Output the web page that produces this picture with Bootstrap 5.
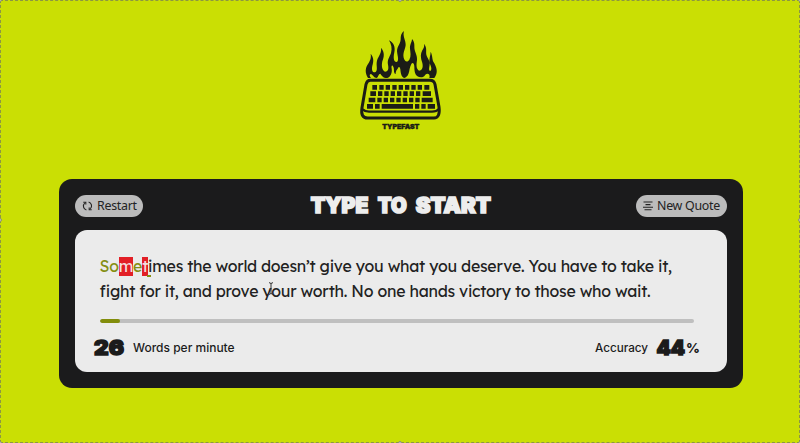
<!DOCTYPE html>
<html lang="en">
<head>
<meta charset="utf-8">
<meta name="viewport" content="width=device-width, initial-scale=1">
<title>Typefast</title>
<link href="https://cdn.jsdelivr.net/npm/bootstrap@5.3.0/dist/css/bootstrap.min.css" rel="stylesheet">
<style>
body{background:#cadf04;color:#1b1b1b;width:800px;height:443px;overflow:hidden;font-family:Inter,sans-serif;position:relative}
.frame-line{position:absolute;inset:0;border:1px dashed #8c9642;pointer-events:none}
.knob{position:absolute;width:4px;height:4px;border-radius:50%;background:#c9cbb5;border:1px solid #8e9470}
.k1{left:-2px;top:-2px}.k2{left:398px;top:-2px}.k3{right:-2px;top:-2px}
.k4{left:-2px;top:218px}.k5{right:-2px;top:218px}
.k6{left:-2px;bottom:-2px}.k7{left:398px;bottom:-2px}.k8{right:-2px;bottom:-2px}
.logo-area{height:179px;padding:20px 0 0 350px}
.logo-area svg{display:block}
.shell{width:684px;height:209px;margin-left:59px;background:#1b1b1c;border-radius:13px;padding:16px 16px 0 16px}
.topbar{height:21px}
.pill{height:22px;border:0;border-radius:11px;background:#bcbcbc;color:#222;font-size:12.4px;letter-spacing:-.27px;line-height:22px;padding:0 7px;white-space:nowrap;font-family:"Noto Sans",sans-serif}
.pill svg{flex:none}
.pill-restart{width:68px}.pill-quote{width:91px}
.title-art{margin-left:169px;margin-right:auto}
.word{font-family:Inter,sans-serif;font-weight:900;font-size:21.5px;fill:#ededed;stroke:#ededed;stroke-width:1.7px;stroke-linejoin:miter;stroke-miterlimit:2}
.paper{height:142px;margin-top:14px;background:#ebebeb;border-radius:12px;padding:24px 24px 0 24.5px}
.quote{font-family:Lexend,"Noto Sans",sans-serif;font-size:15.9px;line-height:24.5px;letter-spacing:-.25px;color:#222;white-space:nowrap;font-feature-settings:"liga" 1}
.ok{color:#858f12}
.bad{background:#e21f26;color:#f4dede;display:inline-block;line-height:19px;height:19px}
.caret{position:relative}
.caret::after{content:"";position:absolute;left:-1px;bottom:-1px;width:4px;height:2px;background:#858f12}
.pointer-i{position:absolute;left:267px;top:282px}
.meter{height:4px;width:594px;margin-top:16px;border-radius:2px;background:#bfbfbf}
.meter .progress-bar{background:#828d0b;border-radius:2px;width:20px}
.stats{margin:16px 3px 0 -7px;height:18px;font-size:12px;font-weight:500;line-height:18px}
.figure-num{font-weight:900;font-size:20px;fill:#1b1b1b;stroke:#1b1b1b;stroke-width:1.4px;stroke-linejoin:miter;stroke-miterlimit:2}
.pct{font-size:13.5px;font-weight:800}
.wpm{margin-left:6.5px}
.acc{margin-right:8px;font-size:11.7px}
</style>
</head>
<body>
<header class="logo-area">
<svg width="100" height="115" viewBox="0 0 300 345" fill="#1b1c16">
<path d="M54 174C44 158 46 144 54 132C60 122 64 115 62 101C72 113 71 124 67 137C64 150 68 158 75 157C84 153 79 139 80 128C81 110 96 103 93 83C105 97 102 111 97 124C94 138 96 151 105 155C116 154 116 145 114 134C111 119 119 111 123 99C127 85 124 73 117 61C132 68 136 82 133 97C129 115 132 126 139 126C147 124 144 112 142 101C138 81 151 75 152 58C152 48 153 40 162 33C157 49 168 61 167 75C166 88 158 97 161 113C164 125 172 128 178 119C184 108 181 97 180 86C179 73 186 66 186 57C196 68 192 77 194 89C196 99 202 106 201 120C199 134 198 146 207 152C217 152 220 141 217 129C211 113 211 101 217 91C221 84 224 79 222 71C233 85 226 95 230 107C234 117 240 122 239 134C238 142 235 151 241 153C247 149 243 139 239 130C236 117 242 106 242 95C248 108 246 116 250 125C261 142 265 157 253 174H238C242 162 232 158 226 164C220 174 210 174 201 168C194 162 193 150 193 140C193 131 188 125 184 132C178 144 179 151 176 160C173 170 166 174 162 174C153 170 152 157 151 148C149 139 146 140 143 146C137 153 137 157 137 162C130 159 133 151 131 143C127 132 123 137 125 146C127 158 122 170 112 174C98 174 95 166 91 161C84 163 86 170 80 174C72 174 69 164 62 162C57 164 59 169 63 174Z"/>
<path d="M61 181H240Q252 181 255 193L267 261Q271 294 252 294H53Q31 294 36 263L48 193Q51 181 61 181Z" fill="none" stroke="#1b1c16" stroke-width="9"/>
<path d="M38 268Q45 275 57 275H246Q260 275 267 267" fill="none" stroke="#1b1c16" stroke-width="7"/>
<g fill="none" stroke="#1b1c16" stroke-width="14">
<path d="M67 202H81M88 202H101M107 202H120M127 202H140M146 202H159M165 202H178M184 202H197M203 202H216M223 202H238"/>
<path d="M61 221H78M84 221H97M103 221H116M122 221H135M141 221H154M160 221H173M179 221H192M198 221H211M218 221H243"/>
<path d="M56 240H76M82 240H95M101 240H114M120 240H133M139 240H152M158 240H171M177 240H190M196 240H209M215 240H248"/>
<path d="M51 259H69M75 259H89M95 259H189M195 259H208M214 259H227M233 259H255"/>
</g>
<text x="97" y="328" font-family="Inter,sans-serif" font-weight="900" font-size="18" stroke="#1b1c16" stroke-width="1.2" textLength="111" lengthAdjust="spacingAndGlyphs">TYPEFAST</text>
</svg>
</header>
<main class="shell">
<div class="topbar d-flex justify-content-between align-items-start">
<button class="pill pill-restart d-flex align-items-center gap-1"><svg width="11" height="12" viewBox="0 0 11 12" fill="none" stroke="#222" stroke-width="1.1"><path d="M4.4 10A4 4 0 0 1 2.7 3.2M1.3 2.2H3.8V4.6M6.6 2A4 4 0 0 1 8.3 8.8M9.7 9.8H7.2V7.4"/></svg><span>Restart</span></button>
<svg width="180" height="26" viewBox="0 0 180 26" class="title-art overflow-visible"><g class="word"><text x="-1.2" y="18.2" textLength="57.5" lengthAdjust="spacingAndGlyphs">TYPE</text><text x="65.8" y="18.2" textLength="29" lengthAdjust="spacingAndGlyphs">TO</text><text x="103.8" y="18.2" textLength="75" lengthAdjust="spacingAndGlyphs">START</text></g></svg>
<button class="pill pill-quote d-flex align-items-center gap-1"><svg width="10" height="10" viewBox="0 0 10 10" stroke="#222" stroke-width="1.1"><path d="M.5 1H9.5M2.5 3.6H7.5M0 6.2H10M1.5 8.8H8.5"/></svg><span>New Quote</span></button>
</div>
<section class="paper">
<div class="quote"><div><span class="ok">So</span><span class="bad">m</span><span class="ok">e</span><span class="bad">t</span><span class="caret">i</span>mes the world doesn’t give you what you deserve. You have to take it,</div><div>fight for it, and prove your worth. No one hands victory to those who wait.</div></div>
<div class="progress meter"><div class="progress-bar"></div></div>
<div class="stats d-flex justify-content-between">
<div class="d-flex"><svg width="34" height="18" class="overflow-visible"><text x="1" y="16" class="figure-num" textLength="30" lengthAdjust="spacingAndGlyphs">26</text></svg><span class="wpm">Words per minute</span></div>
<div class="d-flex"><span class="acc">Accuracy</span><svg width="30" height="18" class="overflow-visible"><text x=".5" y="16" class="figure-num" textLength="28.5" lengthAdjust="spacingAndGlyphs">44</text></svg><span class="pct">%</span></div>
</div>
</section>
</main>
<svg class="pointer-i" width="8" height="13" viewBox="0 0 8 13" fill="none" stroke="#333" stroke-width="1"><path d="M2 .7Q4 .7 4 2V11Q4 12.3 2 12.3M6 .7Q4 .7 4 2M4 11Q4 12.3 6 12.3"/></svg>
<div class="frame-line"></div>
<i class="knob k1"></i><i class="knob k2"></i><i class="knob k3"></i><i class="knob k4"></i><i class="knob k5"></i><i class="knob k6"></i><i class="knob k7"></i><i class="knob k8"></i>
<script src="https://cdn.jsdelivr.net/npm/bootstrap@5.3.0/dist/js/bootstrap.bundle.min.js"></script>
</body>
</html>
